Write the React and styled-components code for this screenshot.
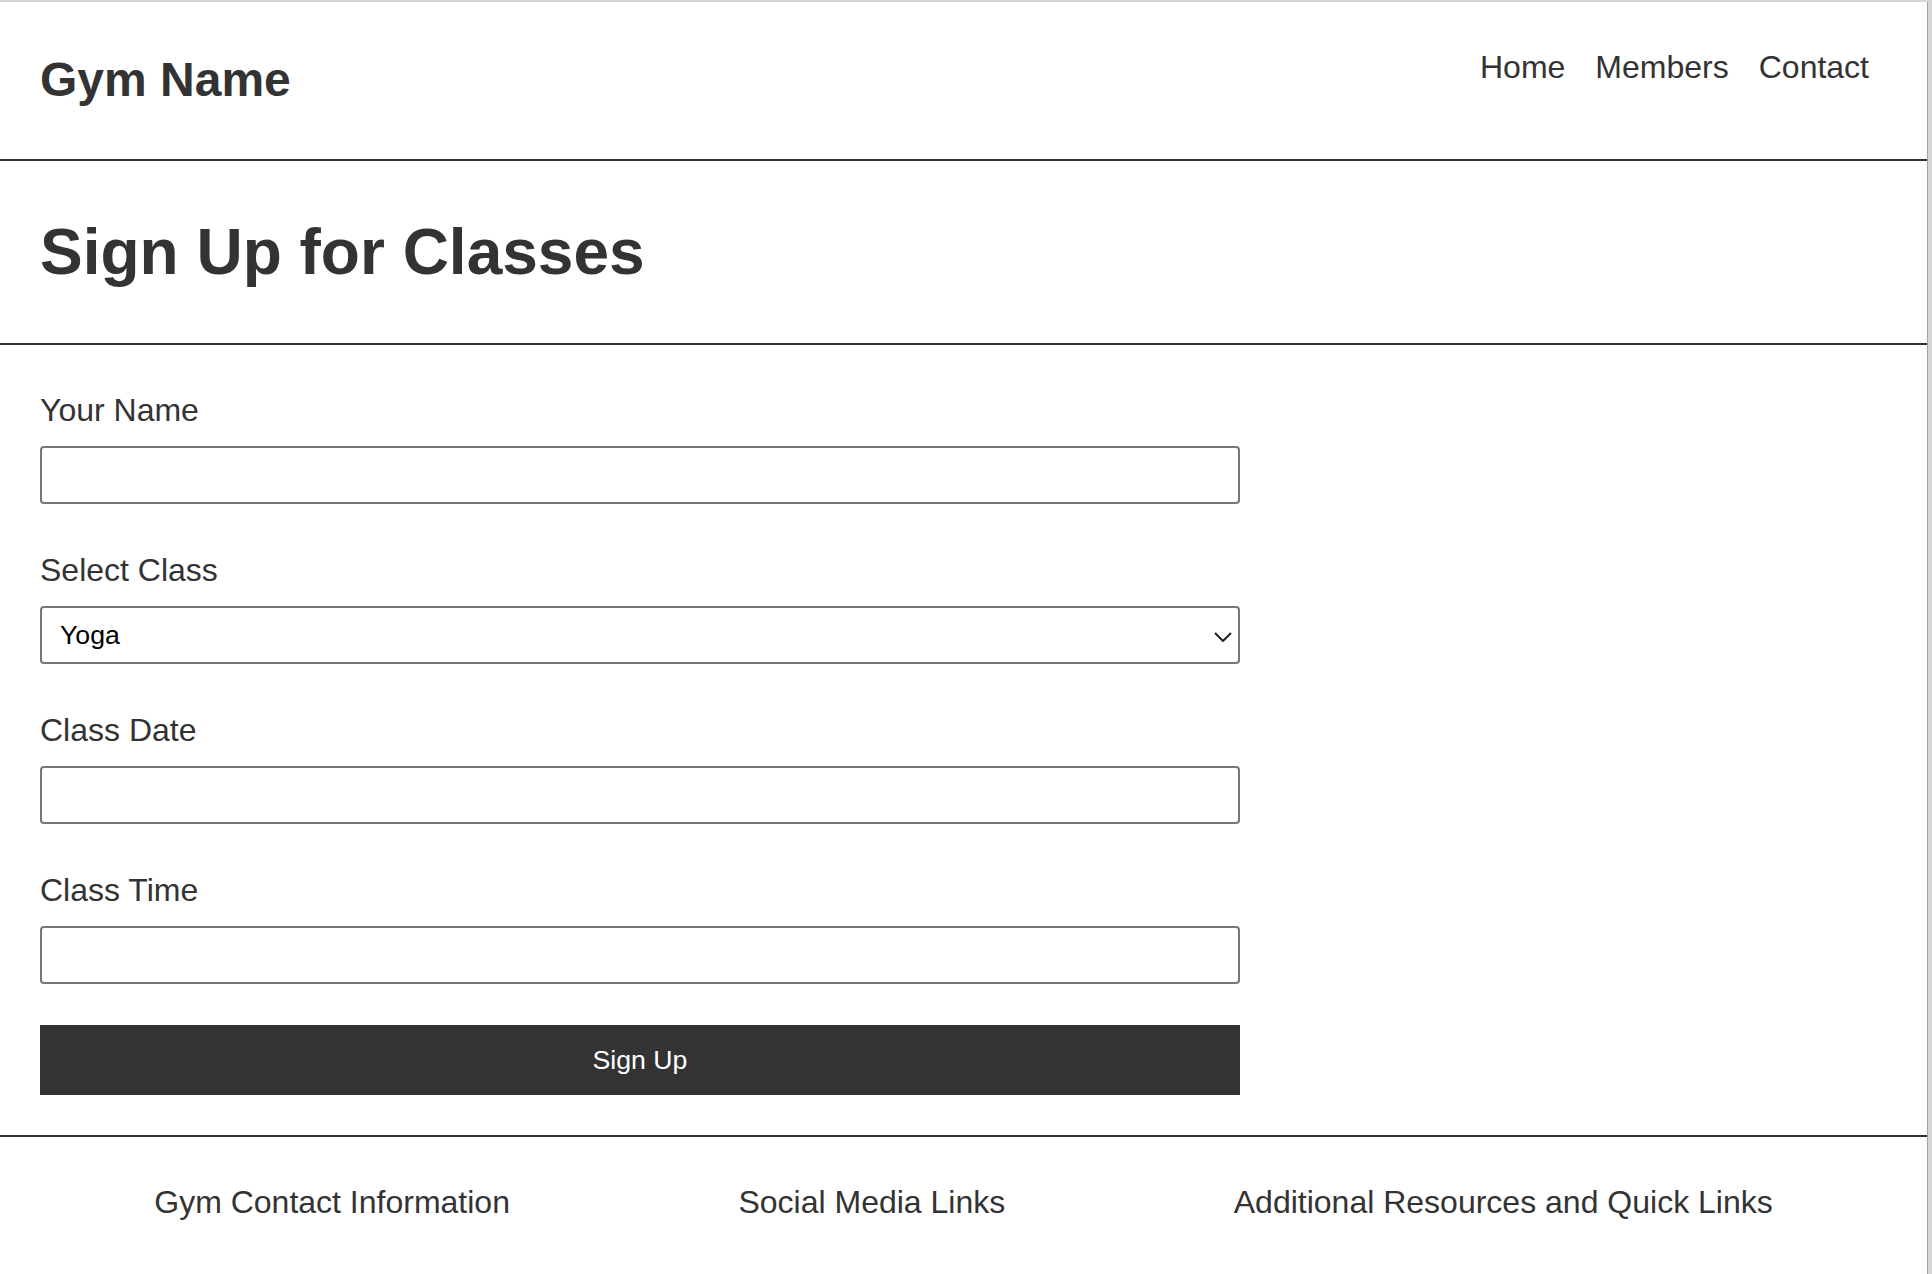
import React from 'react';
import styled, { createGlobalStyle } from 'styled-components';

const GlobalStyle = createGlobalStyle`
  * {
    box-sizing: border-box;
  }

  body {
    margin: 0;
    background-color: #d6d6d6;
    font-family: "Liberation Sans", Arial, sans-serif;
    color: #333;
  }
`;

const Page = styled.div`
  width: 1928px;
  min-height: calc(100vh - 2px);
  margin-top: 2px;
  background-color: #fff;
  border-right: 1px solid #a3a3a3;
`;

const Header = styled.header`
  display: flex;
  justify-content: space-between;
  align-items: flex-start;
  height: 159px;
  padding: 47px 58px 0 40px;
  border-bottom: 2px solid #333;
`;

const Logo = styled.h1`
  margin: 3px 0 0;
  font-size: 48px;
  font-weight: 700;
  line-height: normal;
  color: #333;
`;

const NavList = styled.ul`
  display: flex;
  gap: 30px;
  margin: 0;
  padding: 0;
  list-style: none;
`;

const NavLink = styled.a`
  font-size: 32px;
  line-height: normal;
  color: #333;
  text-decoration: none;
`;

const TitleSection = styled.section`
  padding: 54px 40px;
  border-bottom: 2px solid #333;
`;

const Title = styled.h2`
  margin: 0;
  font-size: 64px;
  font-weight: 700;
  line-height: normal;
  color: #333;
`;

const Form = styled.form`
  padding: 47px 40px 40px;
  border-bottom: 2px solid #333;
`;

const FormInner = styled.div`
  max-width: 1200px;
`;

const Field = styled.div`
  margin-bottom: 48px;

  &:last-of-type {
    margin-bottom: 41px;
  }
`;

const Label = styled.label`
  display: block;
  margin-bottom: 17px;
  font-size: 32px;
  line-height: 37px;
  color: #333;
`;

const TextInput = styled.input`
  display: block;
  width: 100%;
  height: 58px;
  padding: 0 12px;
  border: 2px solid #767676;
  border-radius: 4px;
  background: #fff;
  font-family: "Liberation Sans", Arial, sans-serif;
  font-size: 26.67px;
`;

const SelectWrap = styled.div`
  position: relative;
`;

const Select = styled.select`
  display: block;
  width: 100%;
  height: 58px;
  padding: 0 40px 0 18px;
  border: 2px solid #767676;
  border-radius: 4px;
  background: #fff;
  appearance: none;
  font-family: "Liberation Sans", Arial, sans-serif;
  font-size: 26.67px;
  color: #000;
`;

const Chevron = styled.svg`
  position: absolute;
  right: 8px;
  top: 50%;
  transform: translateY(-30%);
  pointer-events: none;
`;

const SubmitButton = styled.button`
  display: block;
  width: 100%;
  height: 70px;
  border: none;
  border-radius: 0;
  background-color: #333;
  color: #fff;
  font-family: "Liberation Sans", Arial, sans-serif;
  font-size: 26.67px;
  cursor: pointer;
`;

const Footer = styled.footer`
  display: flex;
  justify-content: space-around;
  padding: 47px 40px 40px;
`;

const FooterItem = styled.p`
  margin: 0;
  font-size: 32px;
  line-height: normal;
  color: #333;
`;

const fields = [
  { id: 'name', label: 'Your Name' },
  { id: 'class', label: 'Select Class', select: true },
  { id: 'date', label: 'Class Date' },
  { id: 'time', label: 'Class Time' },
];

const App = () => {
  return (
    <>
      <GlobalStyle />
      <Page>
        <Header>
          <Logo>Gym Name</Logo>
          <nav>
            <NavList>
              <li><NavLink href="#">Home</NavLink></li>
              <li><NavLink href="#">Members</NavLink></li>
              <li><NavLink href="#">Contact</NavLink></li>
            </NavList>
          </nav>
        </Header>

        <TitleSection>
          <Title>Sign Up for Classes</Title>
        </TitleSection>

        <Form onSubmit={(e) => e.preventDefault()}>
          <FormInner>
            {fields.map((f) => (
              <Field key={f.id}>
                <Label htmlFor={f.id}>{f.label}</Label>
                {f.select ? (
                  <SelectWrap>
                    <Select id={f.id} defaultValue="yoga">
                      <option value="yoga">Yoga</option>
                      <option value="pilates">Pilates</option>
                      <option value="spin">Spin</option>
                    </Select>
                    <Chevron width="18" height="10" viewBox="0 0 18 10">
                      <polyline points="1,1 9,9 17,1" fill="none" stroke="#222" strokeWidth="2" />
                    </Chevron>
                  </SelectWrap>
                ) : (
                  <TextInput id={f.id} type="text" />
                )}
              </Field>
            ))}
            <SubmitButton type="submit">Sign Up</SubmitButton>
          </FormInner>
        </Form>

        <Footer>
          <FooterItem>Gym Contact Information</FooterItem>
          <FooterItem>Social Media Links</FooterItem>
          <FooterItem>Additional Resources and Quick Links</FooterItem>
        </Footer>
      </Page>
    </>
  );
};

export default App;
